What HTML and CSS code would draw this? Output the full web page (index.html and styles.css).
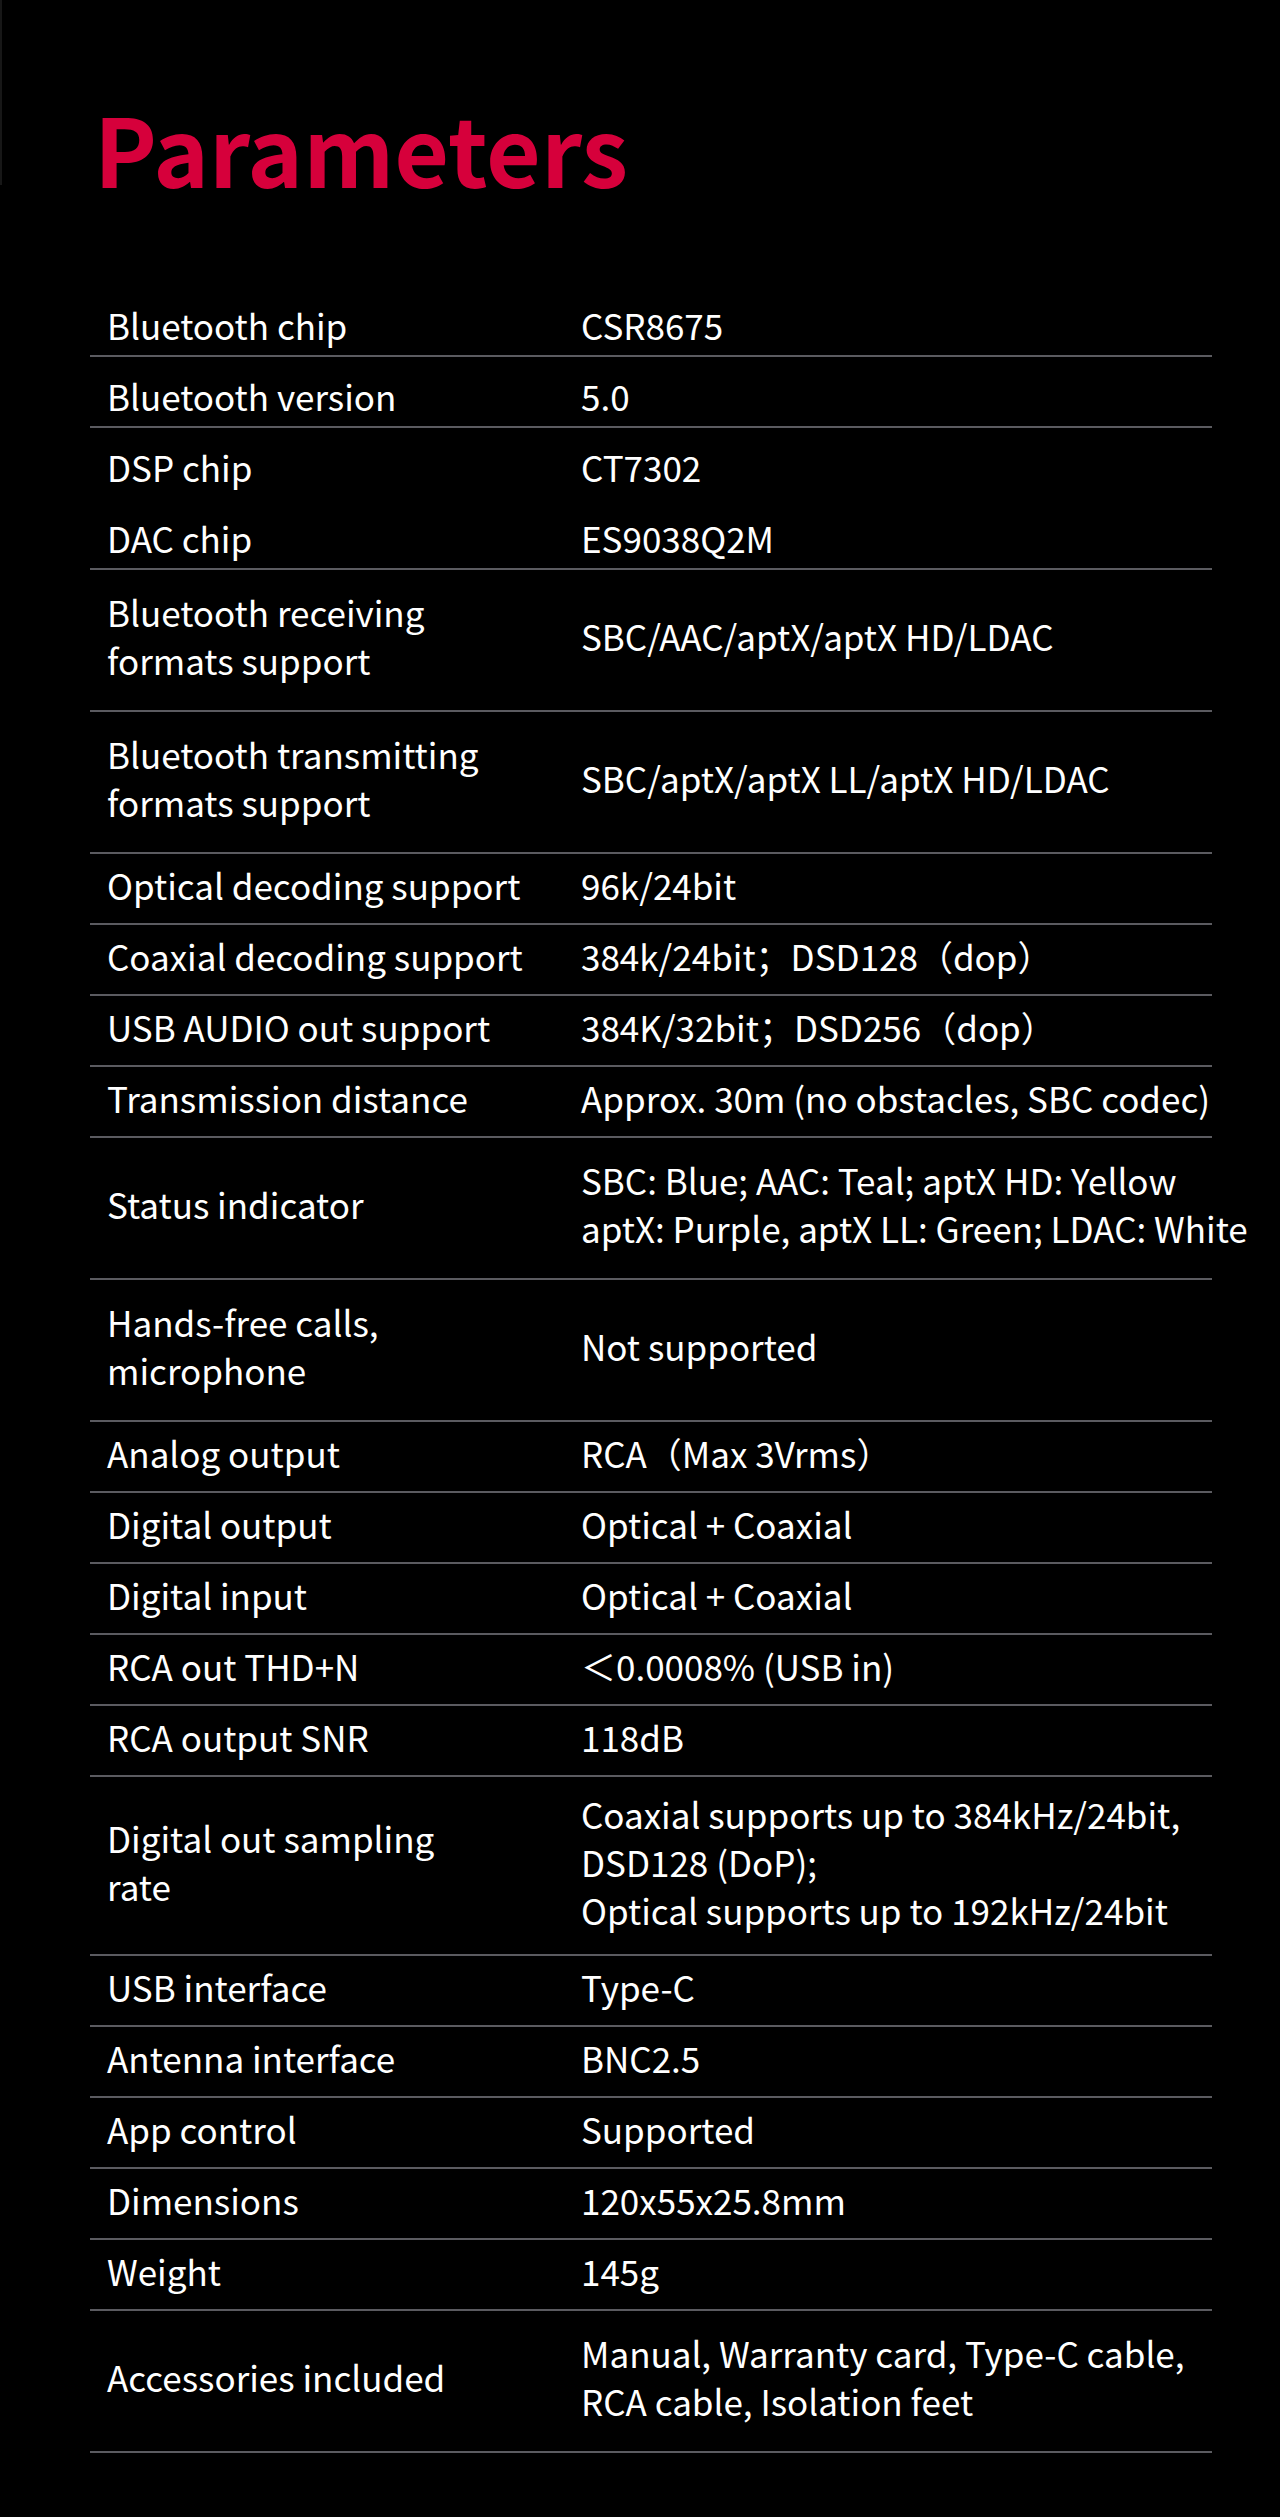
FILE: index.html
```html
<!DOCTYPE html>
<html lang="en">
<head>
<meta charset="utf-8">
<title>Parameters</title>
<link rel="stylesheet" href="styles.css">
</head>
<body>
<div class="page">
  <header class="head">
    <h1 class="title">Parameters</h1>
  </header>
  <div class="spec">
    <div class="row lo"><div class="k">Bluetooth chip</div><div class="v">CSR8675</div></div>
    <div class="row lo"><div class="k">Bluetooth version</div><div class="v">5.0</div></div>
    <div class="row lo nb"><div class="k">DSP chip</div><div class="v">CT7302</div></div>
    <div class="row lo"><div class="k">DAC chip</div><div class="v">ES9038Q2M</div></div>
    <div class="row x2"><div class="k">Bluetooth receiving<br>formats support</div><div class="v">SBC/AAC/aptX/aptX HD/LDAC</div></div>
    <div class="row x2"><div class="k">Bluetooth transmitting<br>formats support</div><div class="v">SBC/aptX/aptX LL/aptX HD/LDAC</div></div>
    <div class="row"><div class="k">Optical decoding support</div><div class="v">96k/24bit</div></div>
    <div class="row"><div class="k">Coaxial decoding support</div><div class="v">384k/24bit；DSD128（dop）</div></div>
    <div class="row"><div class="k">USB AUDIO out support</div><div class="v">384K/32bit；DSD256（dop）</div></div>
    <div class="row"><div class="k">Transmission distance</div><div class="v">Approx. 30m (no obstacles, SBC codec)</div></div>
    <div class="row x2"><div class="k">Status indicator</div><div class="v">SBC: Blue; AAC: Teal; aptX HD: Yellow<br>aptX: Purple, aptX LL: Green; LDAC: White</div></div>
    <div class="row x2"><div class="k">Hands-free calls,<br>microphone</div><div class="v">Not supported</div></div>
    <div class="row"><div class="k">Analog output</div><div class="v">RCA（Max 3Vrms）</div></div>
    <div class="row"><div class="k">Digital output</div><div class="v">Optical + Coaxial</div></div>
    <div class="row"><div class="k">Digital input</div><div class="v">Optical + Coaxial</div></div>
    <div class="row"><div class="k">RCA out THD+N</div><div class="v">＜0.0008% (USB in)</div></div>
    <div class="row"><div class="k">RCA output SNR</div><div class="v">118dB</div></div>
    <div class="row x3"><div class="k">Digital out sampling<br>rate</div><div class="v">Coaxial supports up to 384kHz/24bit,<br>DSD128 (DoP);<br>Optical supports up to 192kHz/24bit</div></div>
    <div class="row"><div class="k">USB interface</div><div class="v">Type-C</div></div>
    <div class="row"><div class="k">Antenna interface</div><div class="v">BNC2.5</div></div>
    <div class="row"><div class="k">App control</div><div class="v">Supported</div></div>
    <div class="row"><div class="k">Dimensions</div><div class="v">120x55x25.8mm</div></div>
    <div class="row"><div class="k">Weight</div><div class="v">145g</div></div>
    <div class="row x2"><div class="k">Accessories included</div><div class="v">Manual, Warranty card, Type-C cable,<br>RCA cable, Isolation feet</div></div>
  </div>
</div>
</body>
</html>
```

FILE: styles.css
```css
html, body {
  margin: 0;
  padding: 0;
  background: #000;
}

body {
  font-family: "Noto Sans CJK SC", "Noto Sans", sans-serif;
  color: #fff;
}

.page {
  width: 1280px;
  min-height: 2517px;
  background: #000;
}

.head {
  height: 185px;
  box-sizing: border-box;
  border-left: 2px solid #171717;
  padding: 101px 0 0 92px;
}

.title {
  margin: 0;
  font-size: 94.5px;
  line-height: 91px;
  font-weight: 700;
  color: #d6003b;
}

.spec {
  margin: 101px 0 0 90px;
  width: 1122px;
}

.row {
  display: grid;
  grid-template-columns: 474px 1fr;
  align-items: center;
  box-sizing: border-box;
  height: 71px;
  padding: 0 0 8px 17px;
  border-bottom: 2px solid #5b5b60;
  font-size: 35px;
  line-height: 48px;
  font-weight: 400;
}

.row.lo {
  padding: 8px 0 0 17px;
}

.row.nb {
  border-bottom-color: transparent;
}

.row.x2 {
  height: 142px;
}

.row.x3 {
  height: 179px;
}

.v {
  white-space: nowrap;
}
```
